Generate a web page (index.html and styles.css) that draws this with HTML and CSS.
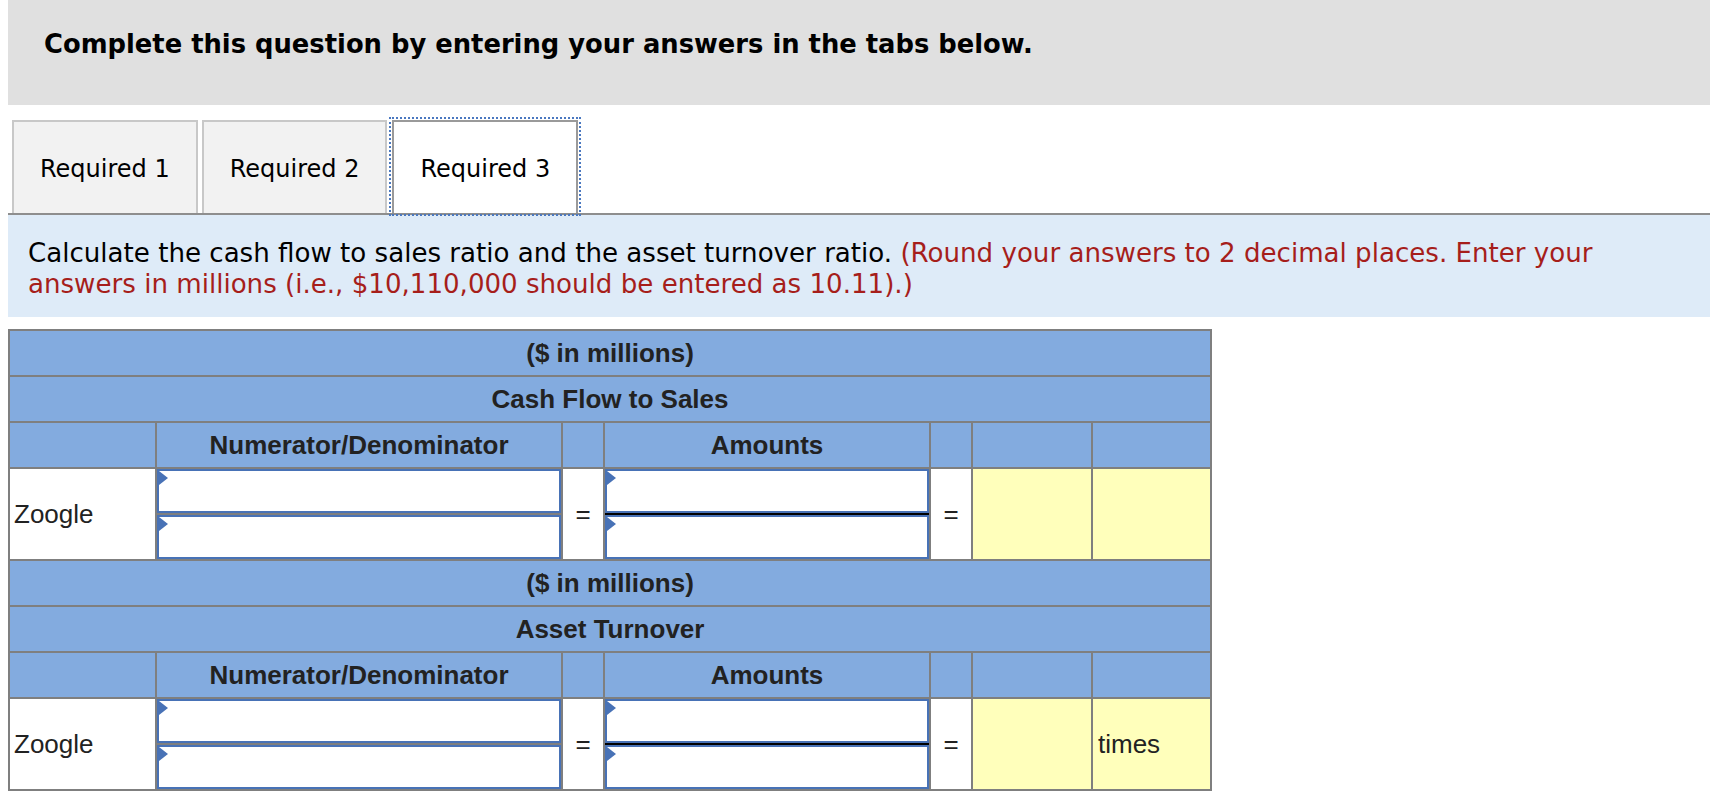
FILE: index.html
```html
<!DOCTYPE html>
<html>
<head>
<meta charset="utf-8">
<title>Required 3</title>
<link rel="stylesheet" href="styles.css">
</head>
<body>
<div class="page">
  <div class="banner">Complete this question by entering your answers in the tabs below.</div>
  <div class="tabs">
    <div class="tab">Required 1</div>
    <div class="tab">Required 2</div>
    <div class="tab active">Required 3</div>
  </div>
  <div class="instr">Calculate the cash flow to sales ratio and the asset turnover ratio. <span class="red">(Round your answers to 2 decimal places. Enter your<br>answers in millions (i.e., $10,110,000 should be entered as 10.11).)</span></div>
  <table class="ratio">
    <colgroup>
      <col class="c1"><col class="c2"><col class="c3"><col class="c4"><col class="c5"><col class="c6"><col class="c7">
    </colgroup>
    <tr class="hrow"><th colspan="7">($ in millions)</th></tr>
    <tr class="hrow"><th colspan="7">Cash Flow to Sales</th></tr>
    <tr class="hrow"><th></th><th>Numerator/Denominator</th><th></th><th>Amounts</th><th></th><th></th><th></th></tr>
    <tr class="drow">
      <td class="label">Zoogle</td>
      <td class="pcell"><div class="pair"><div class="inp"><span class="tri"></span></div><div class="sep"></div><div class="inp low"><span class="tri"></span></div></div></td>
      <td class="eq">=</td>
      <td class="pcell"><div class="pair"><div class="inp"><span class="tri"></span></div><div class="sep frac"></div><div class="inp low"><span class="tri"></span></div></div></td>
      <td class="eq">=</td>
      <td class="res"></td>
      <td class="res unit"></td>
    </tr>
    <tr class="hrow"><th colspan="7">($ in millions)</th></tr>
    <tr class="hrow"><th colspan="7">Asset Turnover</th></tr>
    <tr class="hrow"><th></th><th>Numerator/Denominator</th><th></th><th>Amounts</th><th></th><th></th><th></th></tr>
    <tr class="drow">
      <td class="label">Zoogle</td>
      <td class="pcell"><div class="pair"><div class="inp"><span class="tri"></span></div><div class="sep"></div><div class="inp low"><span class="tri"></span></div></div></td>
      <td class="eq">=</td>
      <td class="pcell"><div class="pair"><div class="inp"><span class="tri"></span></div><div class="sep frac"></div><div class="inp low"><span class="tri"></span></div></div></td>
      <td class="eq">=</td>
      <td class="res"></td>
      <td class="res unit">times</td>
    </tr>
  </table>
</div>
</body>
</html>
```
FILE: styles.css
```css
html, body {
  margin: 0;
  padding: 0;
  background: #ffffff;
}
body {
  font-family: "DejaVu Sans", Verdana, sans-serif;
  color: #000;
}
.page {
  margin: 0 8px;
  width: 1702px;
}
.banner {
  box-sizing: border-box;
  height: 105px;
  background: #e0e0e0;
  padding: 29px 36px 0;
  font-size: 25.8px;
  font-weight: bold;
  line-height: 31px;
}
.tabs {
  display: flex;
  gap: 4px;
  padding: 15px 0 0 4px;
  border-bottom: 2px solid #8e8e8e;
}
.tab {
  box-sizing: border-box;
  height: 93px;
  padding: 1px 26px 0;
  border: 2px solid #c8c8c8;
  border-bottom: none;
  background: #f2f2f2;
  font-size: 24px;
  line-height: 92px;
  white-space: nowrap;
}
.tab.active {
  background: #ffffff;
  border-color: #9a9a9a;
  outline: 2px dotted #4a78c0;
  outline-offset: 1px;
  margin-left: 1px;
}
.instr {
  background: #deebf8;
  padding: 23px 20px 17px 20px;
  font-size: 26.1px;
  line-height: 31px;
}
.red {
  color: #a61e1b;
}
.ratio {
  margin-top: 12px;
  border-collapse: collapse;
  table-layout: fixed;
  width: 1202px;
  font-family: "Liberation Sans", Arial, sans-serif;
  font-size: 26px;
  color: #222;
}
.c1 { width: 147px; }
.c2 { width: 406px; }
.c3 { width: 42px; }
.c4 { width: 326px; }
.c5 { width: 42px; }
.c6 { width: 120px; }
.c7 { width: 119px; }
.ratio th, .ratio td {
  border: 2px solid #7f7f7f;
  padding: 0;
}
.hrow th {
  height: 44px;
  background: #83abdf;
  font-weight: bold;
  text-align: center;
  vertical-align: middle;
}
.drow td {
  height: 90px;
  vertical-align: middle;
  background: #ffffff;
}
.label {
  padding-left: 4px !important;
}
.eq {
  text-align: center;
}
.res {
  background: #ffffbb !important;
}
.unit {
  padding-left: 5px !important;
}
.pair {
  display: flex;
  flex-direction: column;
}
.inp {
  position: relative;
  box-sizing: border-box;
  height: 44px;
  border: 2px solid #4872b6;
  background: #ffffff;
}
.inp.low {
  height: 44px;
}
.sep {
  height: 2px;
  background: #7f7f7f;
}
.sep.frac {
  background: #000000;
}
.tri {
  position: absolute;
  top: 0;
  left: 0;
  width: 0;
  height: 0;
  border-left: 9px solid #4872b6;
  border-top: 7px solid transparent;
  border-bottom: 7px solid transparent;
}
```
